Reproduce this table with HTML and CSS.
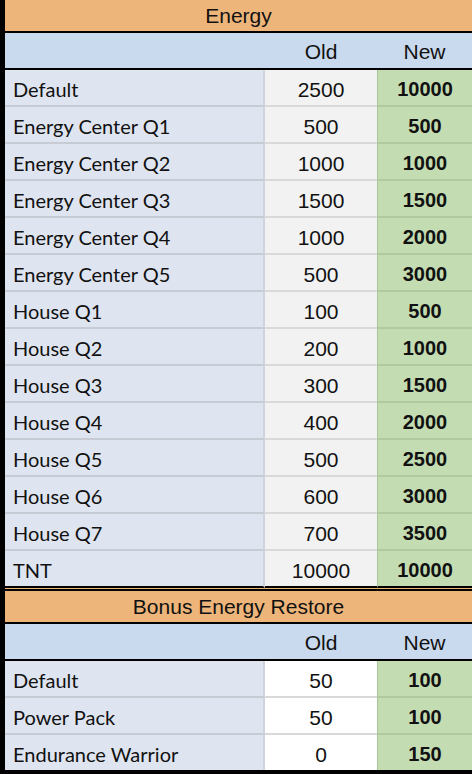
FILE: index.html
```html
<!DOCTYPE html>
<html>
<head>
<meta charset="utf-8">
<link rel="stylesheet" href="styles.css">
</head>
<body>
<div class="sheet">
  <section class="tbl">
    <div class="title">Energy</div>
    <div class="head"><span class="h-label"></span><span class="h-old">Old</span><span class="h-new">New</span></div>
    <div class="row"><span class="lbl">Default</span><span class="old">2500</span><span class="new">10000</span></div>
    <div class="row"><span class="lbl">Energy Center Q1</span><span class="old">500</span><span class="new">500</span></div>
    <div class="row"><span class="lbl">Energy Center Q2</span><span class="old">1000</span><span class="new">1000</span></div>
    <div class="row"><span class="lbl">Energy Center Q3</span><span class="old">1500</span><span class="new">1500</span></div>
    <div class="row"><span class="lbl">Energy Center Q4</span><span class="old">1000</span><span class="new">2000</span></div>
    <div class="row"><span class="lbl">Energy Center Q5</span><span class="old">500</span><span class="new">3000</span></div>
    <div class="row"><span class="lbl">House Q1</span><span class="old">100</span><span class="new">500</span></div>
    <div class="row"><span class="lbl">House Q2</span><span class="old">200</span><span class="new">1000</span></div>
    <div class="row"><span class="lbl">House Q3</span><span class="old">300</span><span class="new">1500</span></div>
    <div class="row"><span class="lbl">House Q4</span><span class="old">400</span><span class="new">2000</span></div>
    <div class="row"><span class="lbl">House Q5</span><span class="old">500</span><span class="new">2500</span></div>
    <div class="row"><span class="lbl">House Q6</span><span class="old">600</span><span class="new">3000</span></div>
    <div class="row"><span class="lbl">House Q7</span><span class="old">700</span><span class="new">3500</span></div>
    <div class="row last"><span class="lbl">TNT</span><span class="old">10000</span><span class="new">10000</span></div>
  </section>
  <div class="gap"></div>
  <section class="tbl second">
    <div class="title">Bonus Energy Restore</div>
    <div class="head"><span class="h-label"></span><span class="h-old">Old</span><span class="h-new">New</span></div>
    <div class="row"><span class="lbl">Default</span><span class="old">50</span><span class="new">100</span></div>
    <div class="row"><span class="lbl">Power Pack</span><span class="old">50</span><span class="new">100</span></div>
    <div class="row last"><span class="lbl">Endurance Warrior</span><span class="old">0</span><span class="new">150</span></div>
  </section>
</div>
</body>
</html>
```

FILE: styles.css
```css
html, body {
  margin: 0;
  padding: 0;
  background: #ffffff;
}
.sheet {
  width: 467px;
  border-left: 5px solid #000;
  height: 774px;
  overflow: hidden;
  background: #000;
}
.tbl {
  display: flex;
  flex-direction: column;
}
.title {
  height: 31px;
  background: #eeb57b;
  border-bottom: 2px solid #000;
  font-family: "Liberation Sans", Arial, sans-serif;
  font-size: 21px;
  color: #111;
  text-align: center;
  line-height: 31px;
  box-sizing: content-box;
}
.head {
  display: grid;
  grid-template-columns: 260px 112px 95px;
  height: 35px;
  background: #c9d9ee;
  border-bottom: 2px solid #000;
  font-family: "Liberation Sans", Arial, sans-serif;
  font-size: 21px;
  color: #111;
}
.head span {
  text-align: center;
  line-height: 38px;
}
.row {
  display: grid;
  grid-template-columns: 260px 112px 95px;
  height: 37px;
}
.row span {
  box-sizing: border-box;
  height: 37px;
  border-bottom: 2px solid;
  display: flex;
  align-items: center;
}
.lbl {
  background: #dfe5f0;
  border-bottom-color: #c6cbd4 !important;
  border-right: 2px solid #cfd4dc;
  padding: 3px 0 0 8px;
  font-family: Lato, "Open Sans", sans-serif;
  font-size: 20px;
  color: #111;
}
.old {
  background: #f2f2f2;
  border-bottom-color: #d9d9d9 !important;
  justify-content: center;
  padding-top: 5px;
  font-family: "Liberation Sans", Arial, sans-serif;
  font-size: 21px;
  color: #111;
}
.second .old {
  background: #ffffff;
}
.new {
  background: #c4dcb2;
  border-bottom-color: #b0c9a0 !important;
  border-left: 1px solid #aac59a;
  justify-content: center;
  padding-top: 3px;
  font-family: "Liberation Sans", Arial, sans-serif;
  font-weight: bold;
  font-size: 20px;
  color: #111;
}
.row.last span {
  border-bottom-color: #000 !important;
}
.gap {
  height: 1px;
  background: #eeb57b;
  border-bottom: 2px solid #000;
}
.second .row.last span {
  height: 35px;
  border-bottom: none;
}
```
